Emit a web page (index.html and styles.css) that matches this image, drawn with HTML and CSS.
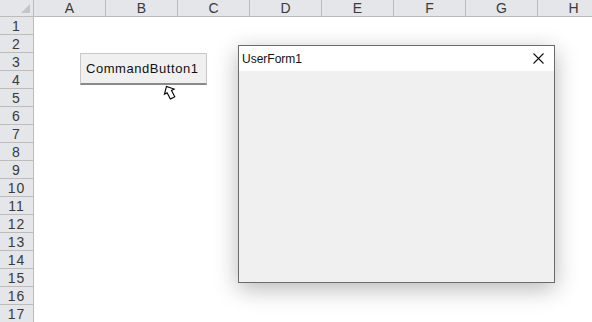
FILE: index.html
```html
<!DOCTYPE html>
<html>
<head>
<meta charset="utf-8">
<link rel="stylesheet" href="styles.css">
</head>
<body>
<div class="sheet">
  <div class="hdr-row">
    <div class="corner"><span class="tri"></span></div>
    <div class="col">A</div><div class="col">B</div><div class="col">C</div><div class="col">D</div>
    <div class="col">E</div><div class="col">F</div><div class="col">G</div><div class="col">H</div>
  </div>
  <div class="rows">
    <div class="rh">1</div><div class="rh">2</div><div class="rh">3</div><div class="rh">4</div>
    <div class="rh">5</div><div class="rh">6</div><div class="rh">7</div><div class="rh">8</div>
    <div class="rh">9</div><div class="rh">10</div><div class="rh">11</div><div class="rh">12</div>
    <div class="rh">13</div><div class="rh">14</div><div class="rh">15</div><div class="rh">16</div>
    <div class="rh">17</div>
  </div>

  <div class="cmd">CommandButton1</div>
  <svg class="cursor" width="18" height="18" viewBox="0 0 18 18">
    <g transform="rotate(-28 9 9)">
      <path d="M9 1.5 L3.5 7.5 L6.5 7.5 L6.5 14.5 L11.5 14.5 L11.5 7.5 L14.5 7.5 Z" fill="#fff" stroke="#000" stroke-width="1.1" stroke-linejoin="miter"/>
    </g>
  </svg>

  <div class="form">
    <div class="title">
      <span class="ttext">UserForm1</span>
      <svg class="close" width="11" height="11" viewBox="0 0 11 11">
        <path d="M0.5 0.5 L10.5 10.5 M10.5 0.5 L0.5 10.5" stroke="#111" stroke-width="1.1"/>
      </svg>
    </div>
    <div class="fbody"></div>
  </div>
</div>
</body>
</html>
```

FILE: styles.css
```css
html, body {
  margin: 0;
  padding: 0;
  background: #fff;
}
.sheet {
  position: relative;
  width: 592px;
  height: 322px;
  overflow: hidden;
  font-family: "Liberation Sans", Arial, sans-serif;
}
.hdr-row {
  display: flex;
  height: 17px;
}
.corner {
  position: relative;
  flex: 0 0 34px;
  box-sizing: border-box;
  background: #e4e6e9;
  border-right: 1px solid #bcbcbc;
  border-bottom: 1px solid #bcbcbc;
}
.tri {
  position: absolute;
  right: 3px;
  bottom: 3px;
  width: 0;
  height: 0;
  border-left: 9px solid transparent;
  border-bottom: 9px solid #c3c6c9;
}
.col {
  flex: 0 0 72px;
  box-sizing: border-box;
  background: #e4e6e9;
  border-right: 1px solid #bcbcbc;
  border-bottom: 1px solid #bcbcbc;
  text-align: center;
  font-size: 14px;
  line-height: 17px;
  color: #3a3a3a;
}
.rows {
  display: flex;
  flex-direction: column;
  width: 34px;
}
.rh {
  height: 18px;
  box-sizing: border-box;
  background: #e4e6e9;
  border-right: 1px solid #bcbcbc;
  border-bottom: 1px solid #bcbcbc;
  text-align: center;
  font-size: 14px;
  line-height: 18px;
  color: #3a3a3a;
  letter-spacing: 1px;
}
.cmd {
  position: absolute;
  left: 80px;
  top: 53px;
  width: 127px;
  height: 32px;
  box-sizing: border-box;
  background: #f0f0f0;
  border: 1px solid #c8c8c8;
  border-bottom: 2px solid #8a8a8a;
  font-size: 13px;
  line-height: 30px;
  padding-left: 5px;
  letter-spacing: 0.55px;
  color: #111;
}
.cursor {
  position: absolute;
  left: 161px;
  top: 84px;
}
.form {
  position: absolute;
  left: 238px;
  top: 45px;
  width: 317px;
  height: 238px;
  box-sizing: border-box;
  border: 1px solid #6b6b6b;
  background: #f0f0f0;
  box-shadow: 0 6px 22px rgba(0,0,0,0.28);
  display: flex;
  flex-direction: column;
}
.title {
  height: 25px;
  background: #fff;
  display: flex;
  align-items: center;
  justify-content: space-between;
  padding: 0 10px 0 3px;
}
.ttext {
  font-family: "Liberation Sans", Arial, sans-serif;
  font-size: 12px;
  color: #111;
}
.close {
  display: block;
}
.fbody {
  flex: 1;
}
```
